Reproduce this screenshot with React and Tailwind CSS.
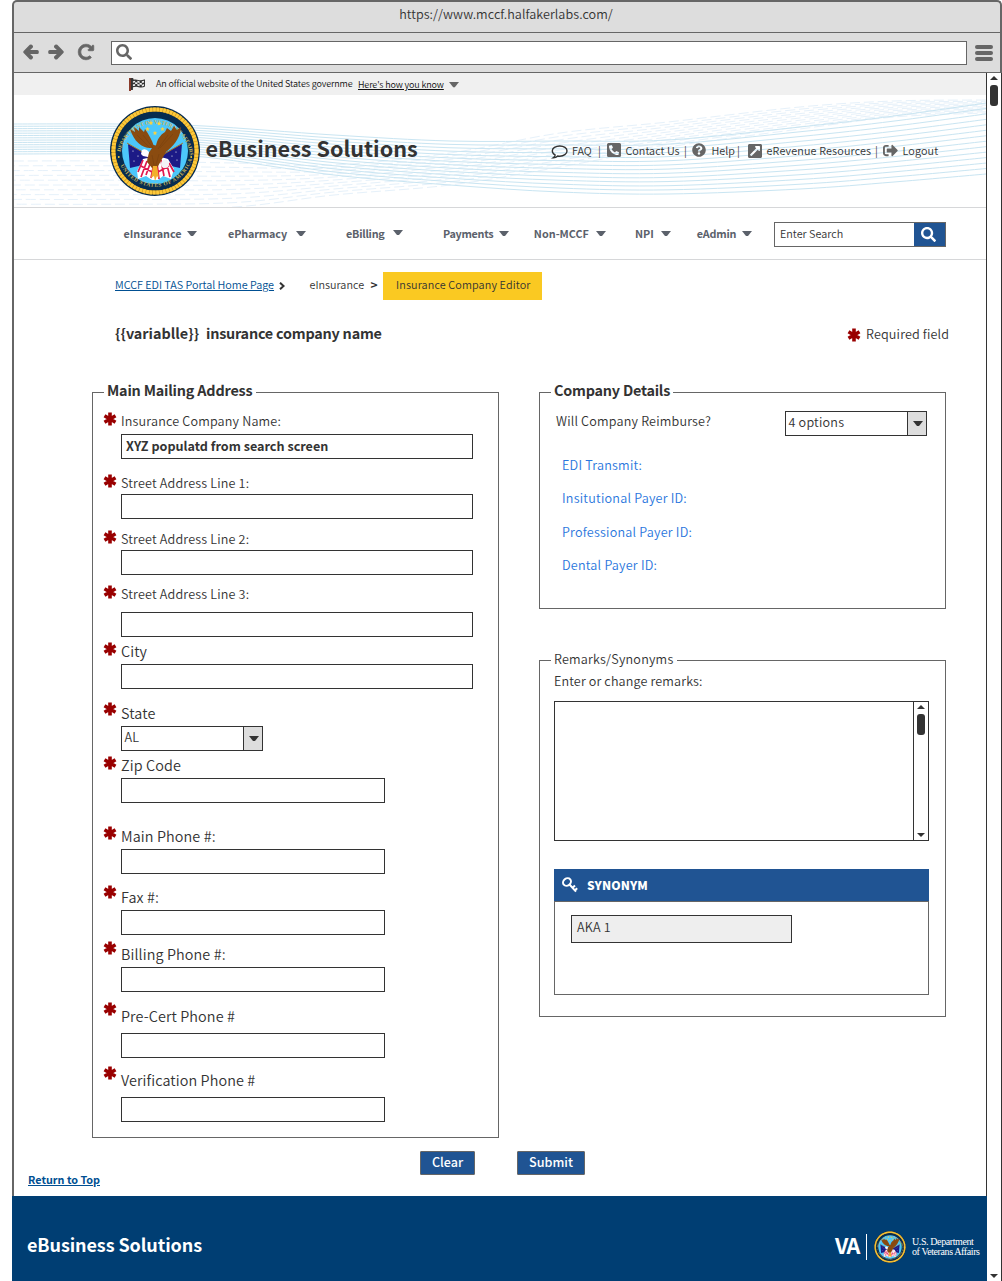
import React from 'react';
import {
  FaArrowLeft,
  FaArrowRight,
  FaExternalLinkSquareAlt,
  FaFlagCheckered,
  FaPhoneSquareAlt,
  FaQuestionCircle,
  FaRedoAlt,
  FaSearch,
  FaSignOutAlt,
} from 'react-icons/fa';

function Caret({ className }) {
  return (
    <svg viewBox="0 0 10 6" preserveAspectRatio="none" className={`h-[5.5px] w-[10px] shrink-0 ${className}`}>
      <path d="M0 0H10L6 5.4Q5 6.400 4 5.400Z" fill="currentColor" />
    </svg>
  );
}

function RequiredMark({ className }) {
  return (
    <svg viewBox="0 0 14 14" className={`h-[14px] w-[14px] shrink-0 ${className}`}>
      <path d="M7 .6V13.400M1.500 3.800L12.500 10.200M12.500 3.800L1.500 10.200" stroke="#900" strokeWidth="3.600" strokeLinecap="butt" />
    </svg>
  );
}

function ScrollBar({ className }) {
  return (
    <div className={`flex w-4 shrink-0 flex-col items-center border-x border-[#333] bg-white text-[#333] ${className}`}>
      <svg viewBox="0 0 8 4" className="h-1 w-2">
        <path d="M4 0L8 4H0Z" fill="currentColor" />
      </svg>
      <div className="mt-[5px] h-[21px] w-2 rounded-[3px] bg-[#333]" />
      <svg viewBox="0 0 8 4" className="mt-auto h-1 w-2">
        <path d="M4 4L8 0H0Z" fill="currentColor" />
      </svg>
    </div>
  );
}

function Seal({ className, id }) {
  return (
    <svg viewBox="0 0 90 90" className={className}>
      <defs>
        <path id={`${id}-top`} d="M10.2 49A35 35 0 0 1 79.8 49" />
        <path id={`${id}-bottom`} d="M7 49A38.6 38.6 0 0 0 83 49" />
      </defs>
      <circle cx="45" cy="45" r="45" fill="#072c50" />
      <circle cx="45" cy="45" r="41.6" fill="none" stroke="#c48f1c" strokeWidth="4" />
      <circle cx="45" cy="45" r="41.6" fill="none" stroke="#fdc93a" strokeWidth="4" strokeDasharray="2.8 0.6" />
      <circle cx="45" cy="45" r="33" fill="#4cc7fb" />
      <g fill="#c9b45a" fontSize="5.4" fontWeight="700" fontFamily="Liberation Serif, serif">
        <text textLength="100">
          <textPath href={`#${id}-top`} startOffset="3">DEPARTMENT OF VETERANS AFFAIRS</textPath>
        </text>
        <text textLength="92">
          <textPath href={`#${id}-bottom`} startOffset="11">UNITED STATES OF AMERICA</textPath>
        </text>
      </g>
      <g fill="#fdd23c">
        <circle cx="8.8" cy="51" r="0.9" />
        <circle cx="81.2" cy="51" r="0.9" />
        {[[41, 17], [49, 17.5], [37.5, 23], [45, 27], [52.5, 23]].map(([x, y]) => (
          <path key={`${x}-${y}`} transform={`translate(${x} ${y})`} d="M0-2.3L.7-.7 2.3-.6 1 .5 1.5 2.1 0 1.2-1.5 2.1-1 .5-2.3-.6-.7-.7Z" />
        ))}
      </g>
      <path d="M18 38L39 49 37 58 20 62Z" fill="#1c1a86" />
      <path d="M72 38L51 49 52 58 70 62Z" fill="#1c1a86" />
      <path d="M17 37L41 51M73 37L49 51" stroke="#a9772b" strokeWidth="1" />
      <g fill="#fff">
        <circle cx="23" cy="45" r=".6" />
        <circle cx="28" cy="50" r=".6" />
        <circle cx="24" cy="55" r=".6" />
        <circle cx="66" cy="46" r=".6" />
        <circle cx="62" cy="50" r=".6" />
        <circle cx="67" cy="54" r=".6" />
      </g>
      <path d="M33 53Q42 50 45 55 49 49 58 53L64 63 61 73 53 70 48 74H42L36 70 28 73 27 65Z" fill="#fff" />
      <path d="M33 54L28 66M37 55L31 71M41 55L36 69M44 57L41 72M47 57L49 73M51 54L54 70M56 55L60 71M59 57L64 66M31 60L42 66M59 60L48 66" stroke="#e0194f" strokeWidth="1.7" fill="none" />
      <path d="M42 42C33 43 24 36 20 23L25 26 24 21 29 25 29 21 34 26 35 23C39 29 42 34 43.5 39L46 39.500C47 34 50 29 55 26L57 22 61 25 64 20 67 24 71 21C70 34 62 41 56 46L52 53 47 62H42L37 56 38 48Z" fill="#8a4b10" />
      <path d="M27 29L40 42M33 29L43 42M63 28L50 42M58 29L48 43M42 49L44 59M49 48L46 59" stroke="#7a4210" strokeWidth=".7" />
      <path d="M32 44Q36 42 39 46L38 51 33 50 31 48Z" fill="#fff" />
      <circle cx="55" cy="58" r="4" fill="#f3f1f7" />
      <path d="M43 60L41 72 44 70 45 75 47 70 49 72 47 60Z" fill="#f2b02b" />
    </svg>
  );
}

// Builds a bundle of evenly spread curves between an upper and a lower edge.
function bundle(stations, count) {
  return Array.from({ length: count }, (_, i) => {
    const t = i / (count - 1);
    const pts = stations.map(([x, top, bottom]) => [x, top + (bottom - top) * t]);
    let d = `M${pts[0][0]} ${pts[0][1]}`;
    for (let k = 0; k < pts.length - 1; k += 1) {
      const a = pts[Math.max(k - 1, 0)];
      const b = pts[k];
      const c = pts[k + 1];
      const e = pts[Math.min(k + 2, pts.length - 1)];
      d += `C${b[0] + (c[0] - a[0]) / 6} ${b[1] + (c[1] - a[1]) / 6} ${c[0] - (e[0] - b[0]) / 6} ${c[1] - (e[1] - b[1]) / 6} ${c[0]} ${c[1]}`;
    }
    return d;
  });
}

const MAIN_WAVES = bundle(
  [[0, 29, 59], [105, 29, 59], [190, 31, 62], [320, 40, 80], [436, 46, 90], [546, 46, 97], [654, 45, 99], [786, 32, 94], [880, 21, 87], [972, 8, 79]],
  14,
);
const FAINT_WAVES = bundle(
  [[0, 66, 114], [100, 66, 114], [220, 68, 112], [320, 70, 100], [436, 58, 90], [546, 38, 72], [654, 27, 52], [786, 12, 34], [880, 6, 22], [972, 5, 18]],
  11,
);

function Waves() {
  return (
    <svg viewBox="0 0 972 112" className="absolute inset-0 h-full w-full" fill="none">
      <g stroke="#e6f1fa" strokeDasharray="10 4">
        {FAINT_WAVES.map((d, i) => <path key={d} d={d} strokeDashoffset={(i * 9) % 14} />)}
      </g>
      <g stroke="#c9e5f2">{MAIN_WAVES.map((d) => <path key={d} d={d} />)}</g>
    </svg>
  );
}

const NAV = [
  { label: 'eInsurance', item: 'ml-[109.5px] tracking-[-0.03px]', caret: 'ml-[5.5px]' },
  { label: 'ePharmacy', item: 'ml-[31px] tracking-[-0.13px]', caret: 'ml-[9px]' },
  { label: 'eBilling', item: 'ml-[40px] tracking-[-0.23px]', caret: 'ml-[8.5px] -mt-[2px]' },
  { label: 'Payments', item: 'ml-[40px] tracking-[-0.3px]', caret: 'ml-[5.5px]' },
  { label: 'Non-MCCF', item: 'ml-[25px]', caret: 'ml-[7px]' },
  { label: 'NPI', item: 'ml-[29px]', caret: 'ml-[7px]' },
  { label: 'eAdmin', item: 'ml-[26px] tracking-[-0.2px]', caret: 'ml-[5.5px]' },
];

const WIDE = 'w-[352px]';
const SHORT = 'w-[264px]';
const SMALL = 'text-[12.6px] leading-[22px] tracking-[0.17px]';
const LARGE = 'text-[14.4px] leading-5 tracking-[0.1px]';

const FIELDS = [
  { label: 'Insurance Company Name:', row: 'mt-[17px]', star: 'mt-[2px]', box: 'mt-[4px]', type: SMALL, width: WIDE, value: 'XYZ populatd from search screen' },
  { label: 'Street Address Line 1:', row: 'mt-[13px]', star: 'mt-[2px]', box: 'mt-[2px]', type: SMALL, width: WIDE },
  { label: 'Street Address Line 2:', row: 'mt-[9px]', star: 'mt-[2px]', box: 'mt-[2px]', type: SMALL, width: WIDE },
  { label: 'Street Address Line 3:', row: 'mt-[8px]', star: 'mt-[2px]', box: 'mt-[9px]', type: SMALL, width: WIDE },
  { label: 'City', row: 'mt-[4px]', star: 'mt-[1px]', box: 'mt-[3px]', type: LARGE, width: WIDE },
  { label: 'State', row: 'mt-[14px]', star: '-mt-[1px]', box: 'mt-[3px]', type: LARGE, select: 'AL' },
  { label: 'Zip Code', row: 'mt-[4px]', star: 'mt-[1px]', box: 'mt-[3px]', type: LARGE, width: SHORT },
  { label: 'Main Phone #:', row: 'mt-[23px]', star: 'mt-0', box: 'mt-[3px]', type: LARGE, width: SHORT },
  { label: 'Fax #:', row: 'mt-[13px]', star: '-mt-[2px]', box: 'mt-[3px]', type: LARGE, width: SHORT },
  { label: 'Billing Phone #:', row: 'mt-[9px]', star: '-mt-[3px]', box: 'mt-[3px]', type: LARGE, width: SHORT },
  { label: 'Pre-Cert Phone #', row: 'mt-[14px]', star: '-mt-[4px]', box: 'mt-[7px]', type: LARGE, width: SHORT },
  { label: 'Verification Phone #', row: 'mt-[12px]', star: '-mt-[4px]', box: 'mt-[7px]', type: LARGE, width: SHORT },
];

function Select({ value, className }) {
  return (
    <div className={`flex h-[25px] w-[142px] border border-[#333] ${className}`}>
      <span className="grow pl-[2.5px] text-[12.6px] leading-[19px] tracking-[0.2px]">{value}</span>
      <span className="flex w-[19px] items-center justify-center border-l border-[#333] bg-[#ddd]">
        <Caret className="ml-px" />
      </span>
    </div>
  );
}

function Field({ label, row, star, box, type, width, value, select }) {
  return (
    <div className={row}>
      <div className="flex h-5 items-start">
        <RequiredMark className={`ml-[10px] ${star}`} />
        <label className={`ml-1 ${type}`}>{label}</label>
      </div>
      {select ? (
        <Select value={select} className={`ml-7 ${box}`} />
      ) : (
        <div className={`ml-7 h-[25px] border border-[#333] pl-1 text-[12.6px] leading-[22px] font-bold ${width} ${box}`}>{value}</div>
      )}
    </div>
  );
}

function Group({ legend, legendClass, className, children }) {
  return (
    <section className={`relative w-[407px] border border-[#666] ${className}`}>
      <h2 className={`absolute -top-[13px] left-[11px] h-6 bg-white pl-[3px] ${legendClass}`}>{legend}</h2>
      {children}
    </section>
  );
}

export default function App() {
  return (
    <div className="h-[1281px] w-[1002px] overflow-hidden bg-white pl-3 font-['Noto_Sans_CJK_SC',sans-serif] font-[350] whitespace-pre text-[#333]">
      <div className="flex h-full flex-col">
        {/* Browser chrome */}
        <div className="h-[73px] shrink-0 rounded-t-[5px] border-x-2 border-t-2 border-[#666] bg-[#ddd] text-[#666]">
          <div className="h-[31px] border-b border-[#666] pr-[2px] text-center text-[12.6px] leading-[24px] tracking-[0.06px] text-[#333]">
            https://www.mccf.halfakerlabs.com/
          </div>
          <div className="flex h-10 items-center border-b border-[#666]">
            <FaArrowLeft strokeWidth="50" strokeLinejoin="round" className="-mt-px ml-[9px] h-4 w-4 overflow-visible stroke-[#666]" />
            <FaArrowRight strokeWidth="50" strokeLinejoin="round" className="-mt-px ml-[9px] h-4 w-4 overflow-visible stroke-[#666]" />
            <FaRedoAlt strokeWidth="24" className="-mt-px ml-[14px] h-4 w-4 overflow-visible stroke-[#666]" />
            <div className="ml-[17px] flex h-[24px] w-[856px] items-center border border-[#666] bg-white pl-1">
              <FaSearch className="-mt-px h-4 w-4" />
            </div>
            <div className="ml-2 flex w-[18px] flex-col gap-[2px]">
              <span className="h-[4px] rounded-[2px] bg-[#666]" />
              <span className="h-[4px] rounded-[2px] bg-[#666]" />
              <span className="h-[4px] rounded-[2px] bg-[#666]" />
            </div>
          </div>
        </div>

        <div className="flex min-h-0 grow">
          <div className="flex w-[974px] shrink-0 flex-col">
            <div className="h-[1123px] shrink-0 border-l-2 border-[#666]">
              {/* Official banner */}
              <div className="flex h-[22px] bg-[#f0f0f0] pl-[115px] text-[9px] leading-[21px] text-[#111]">
                <span className="mt-[5px] flex h-[13px] w-4">
                  <span className="w-[1.5px] shrink-0 bg-[#8a3b2a]" />
                  <FaFlagCheckered preserveAspectRatio="none" className="-ml-px h-[12px] w-[15.5px] shrink-0 text-[#333]" />
                </span>
                <span className="ml-[11px] w-[197px] tracking-[-0.12px]">An official website of the United States governme</span>
                <span className="mt-px ml-[5px] tracking-[-0.13px] underline underline-offset-1">Here's how you know</span>
                <Caret className="mt-[9px] ml-[5px] text-[#666]" />
              </div>

              {/* Masthead */}
              <header className="relative h-[112px]">
                <Waves />
                <div className="relative flex">
                  <Seal id="masthead" className="mt-[11px] ml-24 h-[90px] w-[90px]" />
                  <h1 className="mt-[37px] ml-[5.5px] w-[213px] text-[21.6px] leading-8 font-bold">eBusiness Solutions</h1>
                  <div className="mt-[45px] ml-[132px] flex h-5 items-center text-[10.8px] leading-5">
                    <svg viewBox="0 0 17 14" className="mt-[3px] h-[14px] w-[17px] shrink-0" fill="none" stroke="#333" strokeWidth="1.4">
                      <path d="M8.8 1C4.600 1 1.300 3.200 1.300 6c0 1.700 1.200 3.100 2.900 4-.2 1.200-1 2.200-2 2.900 1.900 0 3.400-.7 4.500-1.900.7.1 1.400.2 2.100.2 4 0 7.200-2.300 7.200-5.200S12.800 1 8.800 1Z" />
                    </svg>
                    <span className="ml-[4.500px] w-[20px]">FAQ</span>
                    <span className="ml-[6px] w-[3px]">|</span>
                    <FaPhoneSquareAlt className="ml-[6px] h-[16px] w-[14px] shrink-0 text-[#666]" />
                    <span className="ml-[4.500px] w-[55px]">Contact Us</span>
                    <span className="ml-[3.500px] w-[3px]">|</span>
                    <FaQuestionCircle className="ml-[5px] h-[14px] w-[14px] shrink-0 text-[#666]" />
                    <span className="ml-[5.500px] w-[23px]">Help</span>
                    <span className="ml-[2.500px] w-[3px]">|</span>
                    <FaExternalLinkSquareAlt className="mt-[2px] ml-[8px] h-[16px] w-[14px] shrink-0 text-[#666]" />
                    <span className="ml-[4.500px] w-[105px] tracking-[0.15px]">eRevenue Resources</span>
                    <span className="ml-[3.500px] w-[3px]">|</span>
                    <FaSignOutAlt className="ml-[5px] h-[15px] w-[15px] shrink-0 text-[#666]" />
                    <span className="ml-[4.500px] tracking-[0.15px]">Logout</span>
                  </div>
                </div>
              </header>

              {/* Main navigation */}
              <nav className="flex h-[53px] items-center border-y border-[#d6d7d9] text-[10.8px] leading-5 font-bold text-[#5b616b]">
                {NAV.map(({ label, item, caret }) => (
                  <React.Fragment key={label}>
                    <span className={`-mt-[2px] ${item}`}>{label}</span>
                    <Caret className={caret} />
                  </React.Fragment>
                ))}
                <div className="mt-px mr-[40px] ml-auto flex h-[25px] w-[172px] border border-[#666] bg-white">
                  <span className="grow pl-[5px] leading-[21px] font-[350] text-[#333]">Enter Search</span>
                  <span className="flex w-[31px] items-center justify-center bg-[#205493] pr-[2px] text-white">
                    <FaSearch className="h-[15px] w-[15px]" />
                  </span>
                </div>
              </nav>

              {/* Breadcrumb */}
              <div className="mt-3 flex h-7 pl-[101px] text-[10.8px] leading-[25px]">
                <a className="w-[160px] tracking-[-0.02px] text-[#004f92] underline underline-offset-1">MCCF EDI TAS Portal Home Page</a>
                <svg viewBox="0 0 6 8" className="mt-[10px] ml-[4px] h-2 w-[6px]" fill="none" stroke="#333" strokeWidth="2">
                  <path d="M1 .7L4.600 4 1 7.300" />
                </svg>
                <span className="ml-[24.500px] w-[55px]">eInsurance</span>
                <span className="ml-[6px] w-[12.500px] text-[12px] font-bold">&gt;</span>
                <span className="w-[159px] bg-[#fac922] pl-[13px] tracking-[0.13px]">Insurance Company Editor</span>
              </div>
              <div className="mt-[22px] flex h-6 pl-[101px] leading-6">
                <h3 className="flex text-[14.4px] leading-[22px] font-bold">
                  <span className="w-[91px]">{'{{variablle}}'}</span>
                  <span className="w-[175px] tracking-[-0.22px]">insurance company name</span>
                </h3>
                <RequiredMark className="mt-[6px] ml-auto" />
                <span className="ml-[5px] w-[120px] text-[12.6px] tracking-[0.15px]">Required field</span>
              </div>

              {/* Form */}
              <div className="mt-[46px] flex pl-[78px]">
                <Group legend="Main Mailing Address" legendClass="w-[152px] text-[14.4px] leading-5 font-bold tracking-[-0.19px]" className="h-[746px]">
                  {FIELDS.map((field) => <Field key={field.label} {...field} />)}
                </Group>

                <div className="ml-10">
                  <Group legend="Company Details" legendClass="w-[122px] text-[14.4px] leading-5 font-bold tracking-[-0.22px]" className="h-[217px]">
                    <div className="flex pt-[17px] pl-4">
                      <span className="text-[12.6px] leading-[22px] tracking-[0.18px]">Will Company Reimburse?</span>
                      <Select value="4 options" className="mt-px mr-[18px] ml-auto" />
                    </div>
                    <ul className="mt-[12px] pl-[22px] text-[12.6px] leading-[33.400px] tracking-[0.22px] text-[#2a76dd]">
                      <li>EDI Transmit:</li>
                      <li>Insitutional Payer ID:</li>
                      <li>Professional Payer ID:</li>
                      <li>Dental Payer ID:</li>
                    </ul>
                  </Group>

                  <Group legend="Remarks/Synonyms" legendClass="w-[126px] text-[12.6px] leading-[22px] tracking-[0.2px]" className="mt-[51px] h-[357px]">
                    <p className="mt-[9px] ml-[14px] h-5 text-[12.6px] leading-[22px] tracking-[0.14px]">Enter or change remarks:</p>
                    <div className="mt-[11px] ml-[14px] flex h-[140px] w-[375px] border border-r-0 border-[#333]">
                      <div className="grow" />
                      <ScrollBar className="py-[3px]" />
                    </div>
                    <div className="mt-7 ml-[14px] h-[126px] w-[375px]">
                      <div className="flex h-8 items-center bg-[#205493] pl-2 text-white">
                        <svg viewBox="0 0 16 16" className="h-4 w-4" fill="none" stroke="currentColor">
                          <ellipse cx="5" cy="5" rx="4.200" ry="3.500" strokeWidth="2" transform="rotate(-40 5 5)" />
                          <path d="M7.500 7.500L14 14.600M10.800 10.600L13 8.600M13.200 13L15.200 11.200" strokeWidth="2" />
                        </svg>
                        <span className="-mt-px ml-[9px] text-[12px] leading-[30px] font-black tracking-[0.1px]">SYNONYM</span>
                      </div>
                      <div className="h-[94px] border border-[#666] pt-[13px] pl-4">
                        <div className="h-7 w-[221px] border border-[#333] bg-[#eee] pl-[5px] text-[12.6px] leading-[22px] tracking-[0.2px]">AKA 1</div>
                      </div>
                    </div>
                  </Group>
                </div>
              </div>

              {/* Actions */}
              <div className="mt-[13px] flex gap-[42px] pl-[406px] text-[12.6px] leading-[19px] text-white">
                <button className="flex h-6 w-[55px] justify-center rounded-[1px] border border-[#666] bg-[#205493] font-medium">Clear</button>
                <button className="flex h-6 w-[68px] justify-center rounded-[1px] border border-[#666] bg-[#205493] font-medium">Submit</button>
              </div>
              <a className="-mt-[6px] ml-[14px] block text-[10.8px] leading-5 font-bold text-[#004f92] underline underline-offset-1">Return to Top</a>
            </div>

            {/* Footer */}
            <footer className="relative -mr-px flex grow items-center bg-[#003e73] pl-[15px] text-white">
              <span className="mt-[10px] text-[18px] leading-6 font-bold tracking-[-0.1px]">eBusiness Solutions</span>
              <span className="mt-3 ml-auto w-[26px] text-[21.6px] leading-7 font-bold tracking-[-1.500px]">VA</span>
              <span className="mt-4 ml-[5px] h-[26px] w-px bg-white" />
              <Seal id="footer" className="mt-4 ml-[7px] h-8 w-8" />
              <span className="mt-[17px] ml-[6px] w-[75px] font-['Liberation_Serif',serif] text-[10px] leading-[10px] font-normal tracking-[-0.4px]">
                {'U.S. Department\nof Veterans Affairs'}
              </span>
            </footer>
          </div>
          <ScrollBar className="py-[3px]" />
        </div>
      </div>
    </div>
  );
}
